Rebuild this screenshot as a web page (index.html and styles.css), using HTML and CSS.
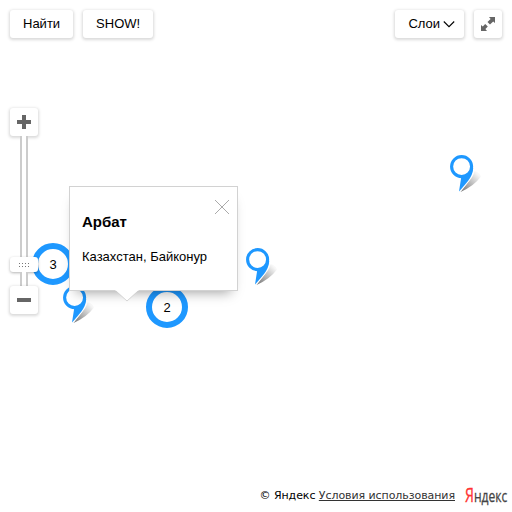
FILE: index.html
```
<!DOCTYPE html>
<html lang="ru">
<head>
<meta charset="utf-8">
<title>Карта</title>
<link rel="stylesheet" href="styles.css">
</head>
<body>
<svg class="defs" width="0" height="0" aria-hidden="true">
  <defs>
    <linearGradient id="shade" x1="0" y1="1" x2="0.85" y2="0.15">
      <stop offset="0" stop-color="#000" stop-opacity=".55"/>
      <stop offset="1" stop-color="#000" stop-opacity=".03"/>
    </linearGradient>
    <symbol id="pin" viewBox="0 0 34 38">
      <path d="M10.5 37 L21.5 23 Q23.5 20 24.7 16 Q29 17 31 21.5 Q24 31 10.5 37Z" fill="url(#shade)"/>
      <path d="M9 36.6 L11.2 22.5 L21 13 L23.2 13 C23 18.5 20.8 22 18.2 25.8 C15.4 29.5 13 32 9 36.6Z" fill="#1e98ff" stroke="#fff" stroke-width="1.6" paint-order="stroke"/>
      <circle cx="11.6" cy="11.6" r="10" fill="#fff" stroke="#1e98ff" stroke-width="3.1"/>
    </symbol>
  </defs>
</svg>
<main class="map">
  <svg class="pin pin-a"><use href="#pin"/></svg>
  <svg class="pin pin-b"><use href="#pin"/></svg>
  <svg class="pin pin-c"><use href="#pin"/></svg>
  <div class="cluster cluster-a">3</div>
  <div class="cluster cluster-b">2</div>

  <header class="toolbar">
    <button class="button">Найти</button>
    <button class="button">SHOW!</button>
    <span class="spacer"></span>
    <button class="button layers">Слои
      <svg width="12" height="8" viewBox="0 0 12 8"><path d="M.8 1.5 L6 6.7 L11.2 1.5" fill="none" stroke="#000" stroke-width="1.1"/></svg>
    </button>
    <button class="button square" aria-label="fullscreen">
      <svg width="14" height="14" viewBox="0 0 14 14" fill="#666"><path d="M8 0H14V6L12.2 4.6L9 7.6L6.5 5.1L9.6 2Z"/><path d="M6 14H0V8L1.8 9.4L4.2 7L6.8 9.6L4.4 12Z"/></svg>
    </button>
  </header>

  <div class="zoom">
    <button class="button square" aria-label="zoom in"><svg width="14" height="14"><path d="M5 0h4v5h5v4H9v5H5V9H0V5h5z" fill="#666"/></svg></button>
    <div class="rail"></div>
    <div class="runner"><svg width="10" height="4" fill="#777"><path d="M0 0h1v1H0zM3 0h1v1H3zM6 0h1v1H6zM9 0h1v1H9zM0 3h1v1H0zM3 3h1v1H3zM6 3h1v1H6zM9 3h1v1H9z"/></svg></div>
    <div class="rail short"></div>
    <button class="button square" aria-label="zoom out"><svg width="14" height="4"><path d="M0 0h14v4H0z" fill="#666"/></svg></button>
  </div>

  <section class="balloon">
    <svg class="close" width="14" height="14" viewBox="0 0 14 14"><path d="M0 0L14 14M14 0L0 14" stroke="#aaa" stroke-width="1"/></svg>
    <h3>Арбат</h3>
    <p>Казахстан, Байконур</p>
    <svg class="tail" width="24" height="12"><path d="M0 0H24L12 11Z" fill="#fff"/><path d="M1 1L12 11L23 1" fill="none" stroke="#ccc" stroke-width=".8"/></svg>
  </section>

  <footer class="copyright">
    <span class="terms">© Яндекс <a>Условия использования</a></span>
    <span class="logo"><span class="logo-first">Я</span><span class="logo-rest">ндекс</span></span>
  </footer>
</main>
</body>
</html>
```
FILE: styles.css
```
* { box-sizing: border-box; }
body { margin: 0; background: #fff; font: 13px "Liberation Sans", Arial, sans-serif; color: #000; }
.defs { position: absolute; }
.map { position: relative; width: 512px; height: 512px; overflow: hidden; display: flex; flex-direction: column; padding: 10px; }
.toolbar { display: flex; gap: 10px; }
.spacer { flex: 1; margin-right: -10px; }
.button { display: flex; align-items: center; justify-content: center; height: 28px; padding: 0 13px 1px; border: 0; border-radius: 3px; background: #fff; font: inherit; color: #000; box-shadow: 0 1px 3px 1px rgba(0,0,0,.15); }
.layers { padding-right: 9px; gap: 3px; }
.square { width: 28px; padding: 0; }
.zoom { position: relative; z-index: 2; display: flex; flex-direction: column; align-items: center; width: 28px; margin-top: 70px; }
.rail { width: 8px; height: 121px; border: solid #ccc; border-width: 0 2px; background: #fff; }
.rail.short { height: 14px; }
.runner { display: flex; align-items: center; justify-content: center; width: 28px; height: 15px; padding-top: 1px; background: #fff; border-radius: 3px; box-shadow: 0 1px 3px rgba(0,0,0,.3); }
.cluster { position: absolute; width: 42px; height: 42px; border: 6px solid #1e98ff; border-radius: 50%; background: #fff; line-height: 32px; text-align: center; }
.cluster-a { left: 32px; top: 243px; }
.cluster-b { left: 146px; top: 286px; }
.pin { position: absolute; width: 34px; height: 38px; }
.pin-a { left: 450px; top: 155px; }
.pin-b { left: 246px; top: 248px; }
.pin-c { left: 63px; top: 286px; }
.balloon { position: absolute; z-index: 1; left: 69px; top: 186px; width: 169px; height: 105px; padding: 26px 12px; border: 1px solid #d2d2d2; background: #fff; box-shadow: 0 8px 12px -7px rgba(0,0,0,.4); }
.balloon h3 { margin: 0; font-size: 15px; line-height: 18px; }
.balloon p { margin: 18px 0 0; line-height: 16px; white-space: nowrap; }
.close { position: absolute; left: 145px; top: 13px; }
.tail { position: absolute; left: 45px; top: 103px; }
.copyright { display: flex; justify-content: flex-end; align-items: flex-start; gap: 10px; margin-top: auto; margin-right: -7px; height: 16px; font: 11px/13px "DejaVu Sans", sans-serif; white-space: nowrap; }
.terms { margin-top: 3px; letter-spacing: -.07px; }
.copyright a { color: #333; text-decoration: underline; }
.logo { display: flex; align-items: baseline; width: 44px; height: 22px; line-height: 22px; font-family: "Open Sans", sans-serif; transform-origin: 0 0; transform: translateY(-2px) scaleX(.71); }
.logo-first { font-size: 20px; color: #f33; -webkit-text-stroke: .3px #f33; }
.logo-rest { font-size: 17px; color: #444; -webkit-text-stroke: .3px #444; }
```
